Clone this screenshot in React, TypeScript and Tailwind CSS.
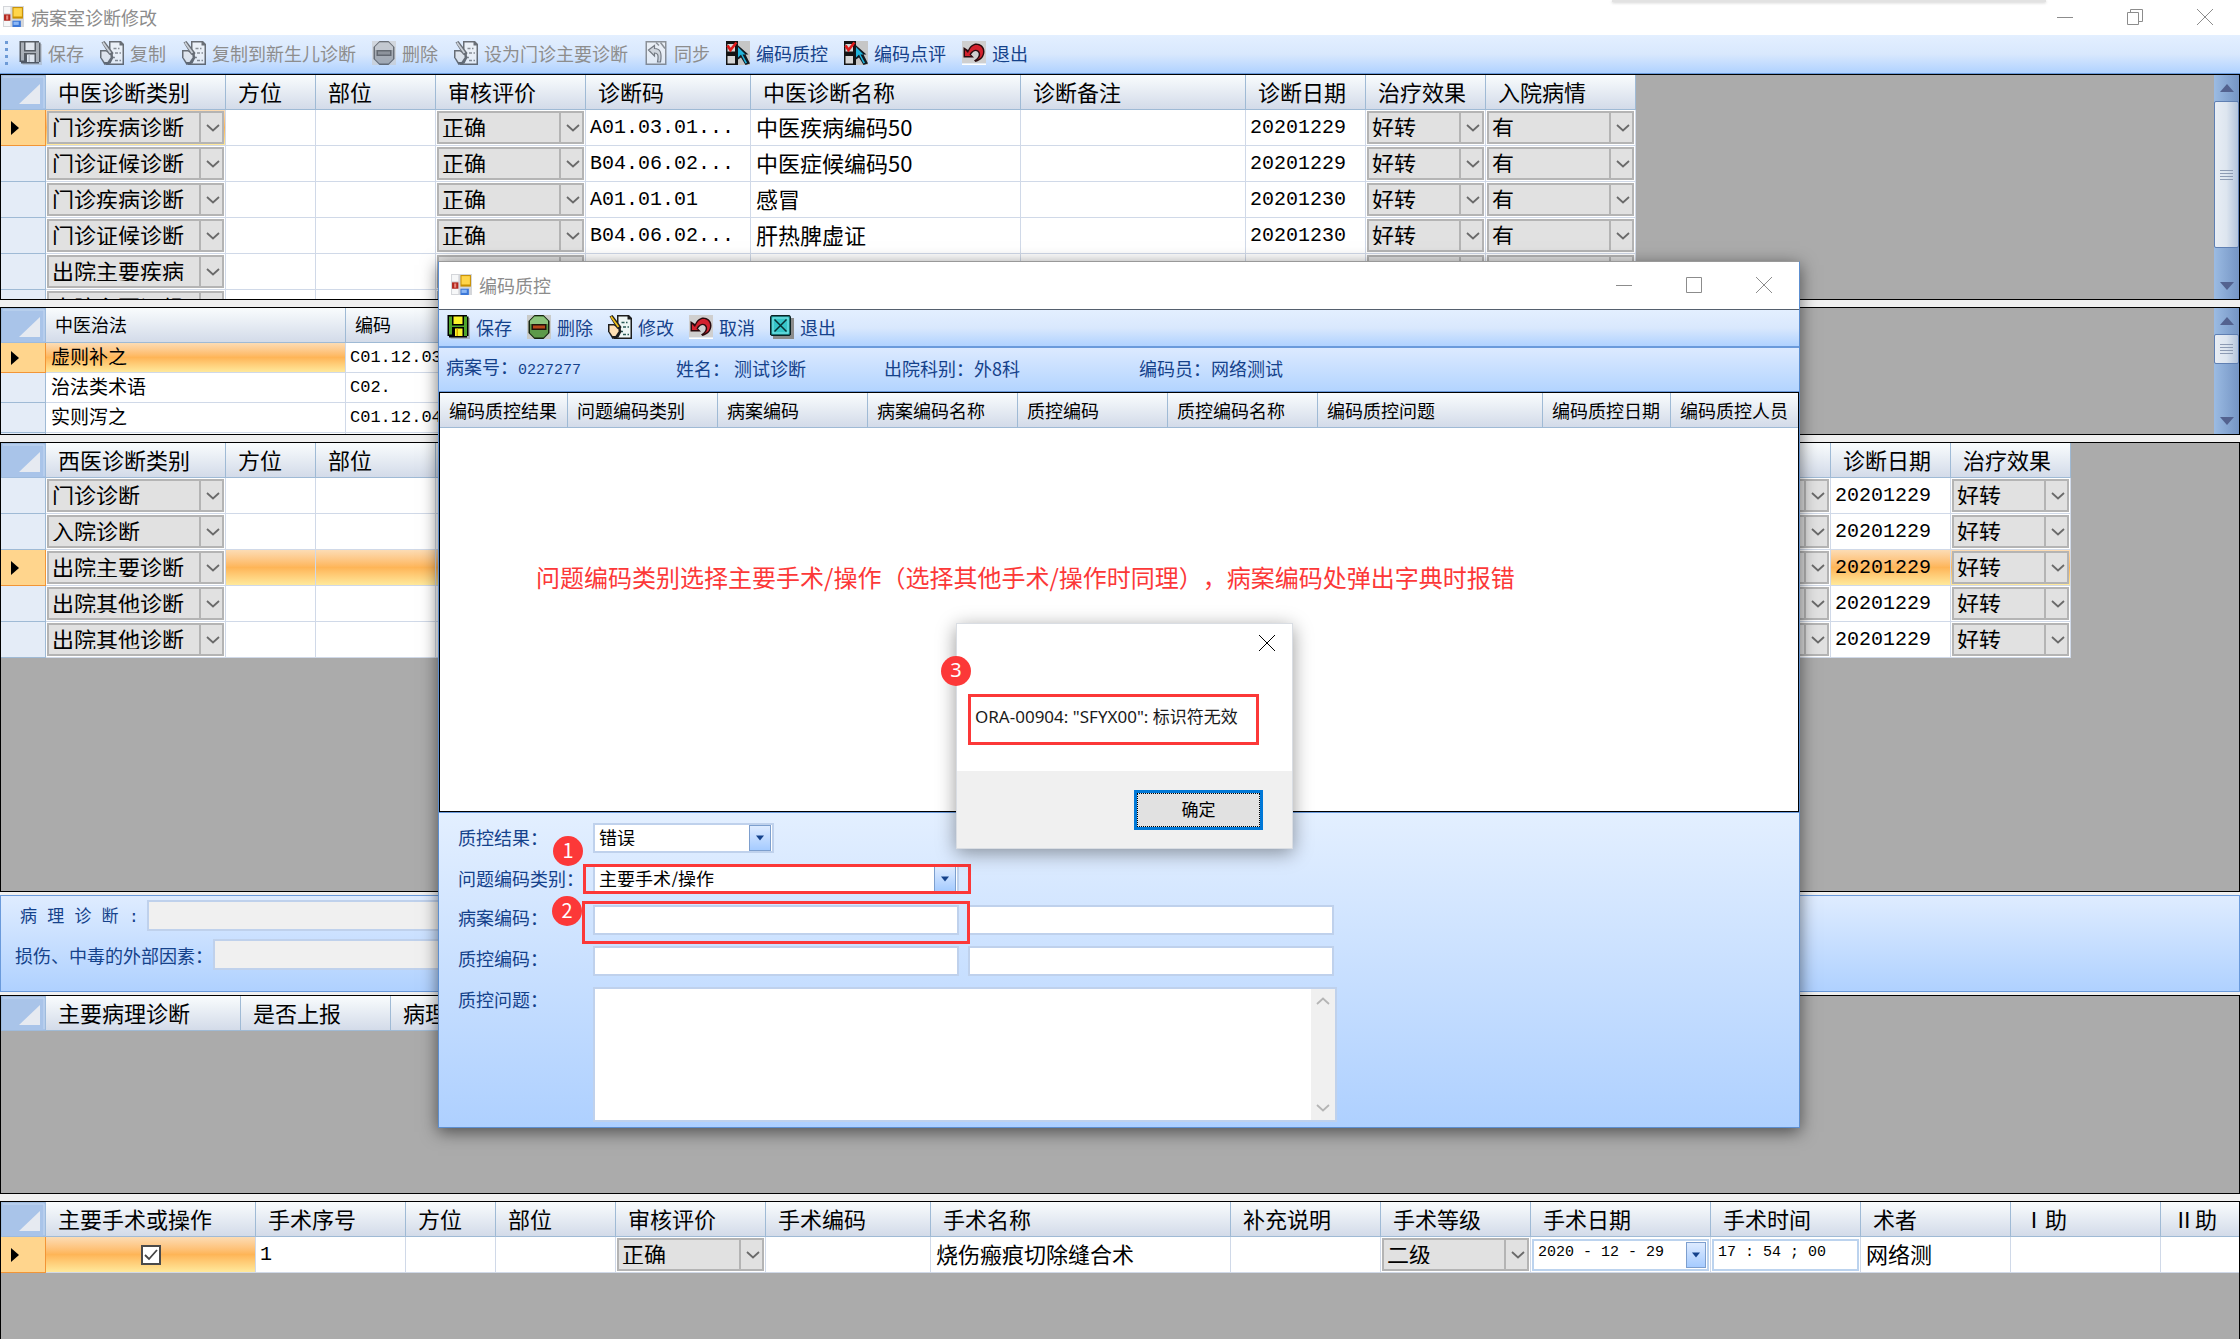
import { type ReactNode } from "react"
import clsx from "clsx"

type Column = {
  title: string
  width: number
  kind?: "combo" | "code" | "check" | "date" | "time"
}

type GridProps = {
  label: string
  columns: Column[]
  rows: string[][]
  current?: number
  highlight?: number[]
  small?: boolean
  className: string
  scroll?: ReactNode
}

/* ---------- icons ---------- */

function FormIcon() {
  return (
    <svg viewBox="0 0 20 20" className="size-[21px] shrink-0">
      <rect width="20" height="20" fill="#d4d6da" />
      <path d="M1 1h6v6H1zM1 14h6v5H1z" fill="#f6f7f8" />
      <rect x="1" y="8" width="6" height="6" fill="#b3261d" />
      <rect x="3" y="9" width="2" height="4" fill="#e88a80" />
      <rect x="9" y="1" width="10" height="11" fill="#c99000" />
      <rect x="10" y="2" width="8" height="8" fill="#ffd54a" />
      <rect x="9" y="14" width="8" height="6" fill="#3c78d8" />
      <rect x="10" y="15" width="5" height="3" fill="#8db8f5" />
    </svg>
  )
}

function SaveIcon() {
  return (
    <svg viewBox="0 0 16 16" className="size-6">
      <path d="M3 2h13v14H3z" fill="#8a8a8a" opacity=".5" />
      <path d="M1 0h13v1h1v13h-1v1H2v-1H1z" fill="#000" />
      <path d="M2 1h2v12H2zM12 1h2v13h-2zM4 7h8v1H4z" fill="#4fa52c" />
      <rect x="5" y="1" width="6" height="5" fill="#f8f32b" />
      <rect x="6" y="9" width="5" height="5" fill="#f8f32b" />
      <path d="M7 9h1v5H7z" fill="#d8a800" />
    </svg>
  )
}

function DeleteIcon() {
  return (
    <svg viewBox="0 0 16 16" className="size-6">
      <rect width="16" height="16" fill="#c9cbc9" />
      <path d="M5 0h6l4 4v8l-4 4H5l-4-4V4z" fill="#16250f" />
      <path d="M5 1h6l3 3v8l-3 3H5l-3-3V4z" fill="#5d9a4a" />
      <path d="M5 1h6l3 3v2H2V4z" fill="#8cc47c" />
      <rect x="3" y="6" width="10" height="4" fill="#23130a" />
      <rect x="4" y="7" width="8" height="2" fill="#b8481a" />
    </svg>
  )
}

function EditIcon() {
  return (
    <svg viewBox="0 0 16 16" className="size-6">
      <path d="M6 0h8l2 2v14H4V9l2-3z" fill="#1d1d1d" />
      <path d="M7 1h6v2h2v12H6V8l1-3z" fill="#eef6f4" />
      <path d="M9 5h4M10 8h4M8 11h3M10 13h4" stroke="#2c5c57" strokeWidth="1" strokeDasharray="2 1" />
      <path d="M0 6h4l4 2 1 3-2 4-4 1-3-5z" fill="#1d1d1d" />
      <path d="M1 7h3l3 2v2l-2 3H3l-2-3z" fill="#ffe0b4" />
      <path d="M1 1l2-1 6 8-1 2-2-1z" fill="#1d1d1d" />
      <path d="M2 1l5 7" stroke="#f2c21b" strokeWidth="1.2" />
    </svg>
  )
}

function UndoIcon() {
  return (
    <svg viewBox="0 0 16 16" className="size-6">
      <rect width="16" height="15" fill="#cfcfcf" />
      <rect y="15" width="16" height="1" fill="#fff" />
      <path d="M1 4v7h7L6 9c2-3 4-3 5-1 .6 2-1 4-3 5l1 1c4-1 6-4 6-7 0-4-4-6-7-5-2 .6-3 2-4 4z" fill="#2a0b0e" />
      <path d="M2 6v4h4L5 9c2-4 6-4 7-1 .5 2-.5 3.500-2 4.500 3-1 4-3 4-5.500 0-3-3-5-6-4-2 .6-3 3-4 5z" fill="#d3222e" />
    </svg>
  )
}

function PickIcon() {
  return (
    <svg viewBox="0 0 16 16" className="size-6">
      <rect width="16" height="16" fill="#c6c6c6" />
      <path d="M0 0h8v16H0z" fill="#141414" />
      <path d="M1 2h5v5H1zM1 10h5v5H1z" fill="#d6d6d6" />
      <path d="M1 3l2 3 4-5" fill="none" stroke="#e01b1b" strokeWidth="1.800" />
      <path d="M7 2l8 7h-2l3 6-3 1-3-5-3 2z" fill="#101820" />
      <path d="M8 4l5 5h-2l3 5.500-1 .5-3-6-2 2z" fill="#21b4dc" />
    </svg>
  )
}

function SyncIcon() {
  return (
    <svg viewBox="0 0 16 16" className="size-6">
      <path d="M1 0h14v16H1z" fill="#555" />
      <path d="M2 1h12v14H2z" fill="#f2f2f2" />
      <path d="M3 6l4-3v2c4 0 5 3 4 9H9c1-5 0-6-2-6v2z" fill="#c9c9c9" stroke="#333" strokeWidth=".8" />
      <path d="M11 1l3 4M8 1l2 2" stroke="#555" />
    </svg>
  )
}

function ExitIcon() {
  return (
    <svg viewBox="0 0 16 16" className="size-6">
      <path d="M2 2h14v14H2z" fill="#8b8b8b" />
      <path d="M1 0h12l1 1v12l-1 1H1l-1-1V1z" fill="#0b2224" />
      <path d="M1 1h12v12H1z" fill="#35c5c8" />
      <path d="M3 3l8 8M11 3l-8 8" stroke="#083033" strokeWidth="1" />
      <path d="M2 2h10v10H2z" fill="none" stroke="#8be8ea" strokeWidth=".6" />
    </svg>
  )
}

function Chevron({ up = false }: { up?: boolean }) {
  return (
    <svg viewBox="0 0 14 8" className={clsx("h-2 w-[14px]", up && "rotate-180")} aria-hidden="true">
      <path d="M1 1l6 5.500L13 1" fill="none" stroke="currentColor" strokeWidth="1.800" />
    </svg>
  )
}

function Triangle({ up = false }: { up?: boolean }) {
  return (
    <svg viewBox="0 0 14 8" className={clsx("h-2 w-[14px]", up && "rotate-180")} aria-hidden="true">
      <path d="M0 0h14L7 8z" fill="#53628f" />
    </svg>
  )
}

/* ---------- window chrome ---------- */

function WindowButtons({ restore = false }: { restore?: boolean }) {
  return (
    <div className="ml-auto flex h-full text-[#8c8c8c]">
      <button aria-label="最小化" className="flex w-[70px] items-center justify-center">
        <svg viewBox="0 0 16 16" className="size-4"><path d="M0 8.500h16" stroke="currentColor" /></svg>
      </button>
      <button aria-label={restore ? "还原" : "最大化"} className="flex w-[70px] items-center justify-center">
        <svg viewBox="0 0 16 16" className="size-4" fill="none" stroke="currentColor">
          {restore ? <path d="M.5 3.500h11v12H.5zM3.500 3.500v-3h12v12h-4" /> : <path d="M.5.5h15v15H.5z" />}
        </svg>
      </button>
      <button aria-label="关闭" className="flex w-[70px] items-center justify-center">
        <svg viewBox="0 0 16 16" className="size-4"><path d="M0 0l16 16M16 0L0 16" stroke="currentColor" /></svg>
      </button>
    </div>
  )
}

function ToolButton({ icon, text, disabled = false }: { icon: ReactNode; text: string; disabled?: boolean }) {
  return (
    <button
      disabled={disabled}
      className={clsx("flex items-center gap-1.5 text-lg leading-6", disabled ? "text-[#8d8d8d]" : "text-[#15428b]")}
    >
      <span className={clsx(disabled && "opacity-60 grayscale")}>{icon}</span>
      {text}
    </button>
  )
}

function ScrollBar({ thumb }: { thumb: string }) {
  return (
    <div className="flex w-[25px] shrink-0 flex-col bg-linear-to-r from-[#9bbbe3] to-[#7595c4]">
      <div className="flex h-[26px] shrink-0 items-center justify-center"><Triangle up /></div>
      <div
        className={clsx(
          "flex shrink-0 flex-col items-center justify-center gap-0.5 rounded-xs border border-[#5f7fb2] bg-linear-to-r from-[#e9eef5] via-[#dde5ef] to-[#b3c4dc]",
          thumb
        )}
      >
        {[0, 1, 2, 3].map((i) => (
          <span key={i} className="h-px w-[13px] bg-[#8d9bb3]" />
        ))}
      </div>
      <div className="flex-1" />
      <div className="flex h-[26px] shrink-0 items-center justify-center"><Triangle /></div>
    </div>
  )
}

/* ---------- grid ---------- */

function Combo({ label, value }: { label: string; value: string }) {
  return (
    <div className="relative h-[33px]">
      <select
        aria-label={label}
        defaultValue={value}
        className="block h-full w-full appearance-none border-2 border-[#b4b4b4] bg-[#e1e1e1] pb-[3px] pl-[3px] text-[22px] leading-none text-black"
      >
        <option>{value}</option>
      </select>
      <span className="pointer-events-none absolute inset-y-0 right-0 flex w-[25px] items-center justify-center border-l-2 border-[#b4b4b4] text-[#6a6a6a]">
        <Chevron />
      </span>
    </div>
  )
}

function DropArrow() {
  return (
    <span className="pointer-events-none flex h-[26px] w-[22px] items-center justify-center border border-[#7d9fce] bg-linear-to-b from-[#deebff] to-[#a5cbff]">
      <svg viewBox="0 0 8 5" className="h-[6px] w-2"><path d="M0 0h8L4 5z" fill="#15428b" /></svg>
    </span>
  )
}

function Cell({ column, value }: { column: Column; value: string }) {
  switch (column.kind) {
    case "combo":
      return <Combo label={column.title || "审核"} value={value} />
    case "code":
      return <span className="pl-1 font-[Liberation_Mono,monospace]">{value}</span>
    case "check":
      return (
        <span className="relative mx-auto block size-5">
          <input
            type="checkbox"
            aria-label={column.title}
            defaultChecked
            className="block size-5 appearance-none border-2 border-[#4a4a4a] bg-white"
          />
          <svg viewBox="0 0 20 20" className="pointer-events-none absolute inset-0">
            <path d="M4 10l4 4 8-9" fill="none" stroke="#444" strokeWidth="1.800" />
          </svg>
        </span>
      )
    case "date":
    case "time":
      return (
        <span className="mx-px flex h-[32px] items-center border-2 border-[#bcd3ee] bg-white pr-px">
          <input
            aria-label={column.title}
            defaultValue={value}
            className="w-full min-w-0 pb-1 pl-1 font-[Liberation_Mono,monospace] text-[15px] leading-5 text-black"
          />
          {column.kind === "date" && <DropArrow />}
        </span>
      )
    default:
      return <span className="pl-[5px]">{value}</span>
  }
}

function Grid({ label, columns, rows, current, highlight = [], small = false, className, scroll }: GridProps) {
  const total = columns.reduce((sum, c) => sum + c.width, 45)

  return (
    <section aria-label={label} className={clsx("flex border border-black bg-[#ababab]", className)}>
      <div className="min-w-0 flex-1 overflow-hidden">
        <table className="table-fixed border-separate border-spacing-0 text-black" style={{ width: total }}>
          <colgroup>
            <col className="w-[45px]" />
            {columns.map((c, i) => (
              <col key={i} style={{ width: c.width }} />
            ))}
          </colgroup>
          <thead>
            <tr className="h-[35px]">
              <th className="border border-[#9ebbdd] bg-[#a9c4e9] p-0">
                <svg viewBox="0 0 43 33" className="block h-[33px] w-[43px]" aria-hidden="true">
                  <path d="M1 1h41v31" fill="none" stroke="#c4d7f0" />
                  <path d="M38 8v20H17z" fill="#e6eaf1" />
                </svg>
              </th>
              {columns.map((c, i) => (
                <th
                  key={i}
                  className={clsx(
                    "border-r border-b border-[#9fbad5] bg-linear-to-b from-[#f9fcfd] to-[#d3dbe9] pt-0 pb-[3px] text-left font-normal whitespace-nowrap",
                    small ? "pl-[9px] text-lg leading-6" : "pl-3 text-[22px] leading-7"
                  )}
                >
                  {c.title}
                </th>
              ))}
            </tr>
          </thead>
          <tbody>
            {rows.map((row, r) => (
              <tr key={r} className={small ? "h-[30px]" : "h-[36px]"}>
                <th
                  className={clsx(
                    "border-r border-b p-0",
                    r === current ? "border-[#f29536] bg-[#ffd58d]" : "border-[#9fbad5] bg-[#e4ecf7]"
                  )}
                >
                  {r === current && (
                    <svg viewBox="0 0 8 14" className="ml-[10px] h-[14px] w-2" aria-hidden="true">
                      <path d="M0 0l8 7-8 7z" />
                    </svg>
                  )}
                </th>
                {columns.map((c, i) => (
                  <td
                    key={i}
                    className={clsx(
                      "border-r border-b border-[#d0d9e8] whitespace-nowrap",
                      c.kind === "combo" ? "px-px py-0" : c.kind && c.kind !== "code" ? "p-0" : "px-0 pt-0 pb-[3px]",
                      c.kind === "code"
                        ? small ? "text-[17px] leading-5" : "text-xl leading-7"
                        : small ? "text-[19px] leading-6" : "text-[22px] leading-7",
                      r === current && highlight.includes(i)
                        ? "bg-linear-to-b from-[#fcdcb4] via-[#feb557] to-[#ffe99b]"
                        : "bg-white"
                    )}
                  >
                    <Cell column={c} value={row[i] ?? ""} />
                  </td>
                ))}
              </tr>
            ))}
          </tbody>
        </table>
      </div>
      {scroll}
    </section>
  )
}

const tcmColumns: Column[] = [
  { title: "中医诊断类别", width: 180, kind: "combo" },
  { title: "方位", width: 90 },
  { title: "部位", width: 120 },
  { title: "审核评价", width: 150, kind: "combo" },
  { title: "诊断码", width: 165, kind: "code" },
  { title: "中医诊断名称", width: 270 },
  { title: "诊断备注", width: 225 },
  { title: "诊断日期", width: 120, kind: "code" },
  { title: "治疗效果", width: 120, kind: "combo" },
  { title: "入院病情", width: 150, kind: "combo" },
]

const tcmRows = [
  ["门诊疾病诊断", "", "", "正确", "A01.03.01...", "中医疾病编码50", "", "20201229", "好转", "有"],
  ["门诊证候诊断", "", "", "正确", "B04.06.02...", "中医症候编码50", "", "20201229", "好转", "有"],
  ["门诊疾病诊断", "", "", "正确", "A01.01.01", "感冒", "", "20201230", "好转", "有"],
  ["门诊证候诊断", "", "", "正确", "B04.06.02...", "肝热脾虚证", "", "20201230", "好转", "有"],
  ["出院主要疾病", "", "", "正确", "", "中医疾病编码", "", "", "好转", "有"],
  ["出院主要证候", "", "", "正确", "", "", "", "", "好转", "有"],
]

const therapyColumns: Column[] = [
  { title: "中医治法", width: 300 },
  { title: "编码", width: 150, kind: "code" },
]

const therapyRows = [
  ["虚则补之", "C01.12.03"],
  ["治法类术语", "C02."],
  ["实则泻之", "C01.12.04"],
  ["", ""],
]

const westernColumns: Column[] = [
  { title: "西医诊断类别", width: 180, kind: "combo" },
  { title: "方位", width: 90 },
  { title: "部位", width: 120 },
  { title: "", width: 1245 },
  { title: "", width: 150, kind: "combo" },
  { title: "诊断日期", width: 120, kind: "code" },
  { title: "治疗效果", width: 120, kind: "combo" },
]

const westernRows = ["门诊诊断", "入院诊断", "出院主要诊断", "出院其他诊断", "出院其他诊断"].map((name) => [
  name, "", "", "", "", "20201229", "好转",
])

const pathologyColumns: Column[] = [
  { title: "主要病理诊断", width: 195 },
  { title: "是否上报", width: 150 },
  { title: "病理", width: 165 },
]

const surgeryColumns: Column[] = [
  { title: "主要手术或操作", width: 210, kind: "check" },
  { title: "手术序号", width: 150, kind: "code" },
  { title: "方位", width: 90 },
  { title: "部位", width: 120 },
  { title: "审核评价", width: 150, kind: "combo" },
  { title: "手术编码", width: 165 },
  { title: "手术名称", width: 300 },
  { title: "补充说明", width: 150 },
  { title: "手术等级", width: 150, kind: "combo" },
  { title: "手术日期", width: 180, kind: "date" },
  { title: "手术时间", width: 150, kind: "time" },
  { title: "术者", width: 150 },
  { title: "Ⅰ助", width: 150 },
  { title: "Ⅱ助", width: 150 },
]

const surgeryRows = [
  ["", "1", "", "", "正确", "", "烧伤瘢痕切除缝合术", "", "二级", "2020 - 12 - 29", "17 : 54 ; 00", "网络测", "", ""],
]

/* ---------- quality control dialog ---------- */

const qcColumns = [
  { title: "编码质控结果", width: 128 },
  { title: "问题编码类别", width: 150 },
  { title: "病案编码", width: 150 },
  { title: "病案编码名称", width: 150 },
  { title: "质控编码", width: 150 },
  { title: "质控编码名称", width: 150 },
  { title: "编码质控问题", width: 225 },
  { title: "编码质控日期", width: 128 },
  { title: "编码质控人员", width: 129 },
]

const fieldBox = "h-[30px] border-2 border-[#bfd1ec] bg-white text-lg leading-none text-black"

function FieldSelect({ id, value, className }: { id: string; value: string; className: string }) {
  return (
    <div className={clsx("relative", className)}>
      <select id={id} defaultValue={value} className={clsx(fieldBox, "block w-full appearance-none pb-[3px] pl-1")}>
        <option>{value}</option>
      </select>
      <span className="pointer-events-none absolute top-0.5 right-[3px]">
        <DropArrow />
      </span>
    </div>
  )
}

function Badge({ n, className }: { n: number; className: string }) {
  return (
    <span
      className={clsx(
        "absolute flex size-[30px] items-center justify-center rounded-full bg-[#fc3838] pb-0.5 text-xl leading-none text-white",
        className
      )}
    >
      {n}
    </span>
  )
}

function MessageBox() {
  return (
    <div
      role="alertdialog"
      aria-label="错误"
      className="absolute top-[361px] left-[517px] flex h-[226px] w-[337px] flex-col border border-[#d9dde3] bg-white font-[Noto_Sans,Noto_Sans_CJK_SC,sans-serif] text-[17px] shadow-[0_4px_18px_rgba(0,0,0,0.4)]"
    >
      <div className="flex justify-end pt-[11px] pr-[17px]">
        <button aria-label="关闭" className="p-0">
          <svg viewBox="0 0 16 16" className="size-4"><path d="M0 0l16 16M16 0L0 16" stroke="#000" /></svg>
        </button>
      </div>
      <div className="flex flex-1 items-end px-[11px] pb-[26px]">
        <p className="h-[51px] w-[291px] border-3 border-[#fc3838] pt-2 pl-1 leading-6 whitespace-nowrap text-[#1a1a1a]">
          ORA-00904: "SFYX00": 标识符无效
        </p>
      </div>
      <div className="flex h-[77px] items-center justify-end bg-[#f0f0f0] pr-[29px]">
        <button className="h-10 w-[129px] border-3 border-[#0078d7] bg-[#e1e1e1] text-black">
          <span className="flex h-full items-center justify-center border border-dotted border-black">确定</span>
        </button>
      </div>
      <Badge n={3} className="top-[32px] -left-4" />
    </div>
  )
}

function QualityDialog() {
  return (
    <div
      role="dialog"
      aria-label="编码质控"
      className="absolute top-[261px] right-0.5 left-0 mx-auto w-[1362px] border border-[#5d8fd0] border-t-[#999] bg-white shadow-[0_4px_16px_rgba(0,0,0,0.55)]"
    >
      <div className="flex h-[47px] items-center gap-[7px] pb-0.5 pl-3 text-lg leading-6 text-[#8c8c8c]">
        <FormIcon />
        编码质控
        <WindowButtons />
      </div>

      <div className="flex h-[39px] items-center gap-[15px] border-t border-b-2 border-t-[#55606e] border-b-[#6a9adb] bg-linear-to-b from-[#e3efff] via-[#d9e8fd] to-[#b0d2ff] pb-[3px] pl-[7px]">
        <ToolButton icon={<SaveIcon />} text="保存" />
        <ToolButton icon={<DeleteIcon />} text="删除" />
        <ToolButton icon={<EditIcon />} text="修改" />
        <ToolButton icon={<UndoIcon />} text="取消" />
        <ToolButton icon={<ExitIcon />} text="退出" />
      </div>

      <div className="grid h-[44px] grid-cols-[230px_208px_255px_1fr] items-center border-b border-[#6a9adb] bg-linear-to-b from-[#dceaff] to-[#b3d4ff] pb-[3px] pl-[7px] text-lg leading-6 text-[#15428b]">
        <p>
          病案号：<span className="font-[Liberation_Mono,monospace] text-[15px]">0227277</span>
        </p>
        <p>姓名： 测试诊断</p>
        <p>出院科别：外8科</p>
        <p>编码员：网络测试</p>
      </div>

      <div className="h-[420px] overflow-hidden border border-black bg-white">
        <table className="w-full table-fixed border-separate border-spacing-0 text-lg leading-6 text-black">
          <colgroup>
            {qcColumns.map((c) => (
              <col key={c.title} style={{ width: c.width }} />
            ))}
          </colgroup>
          <thead>
            <tr className="h-[35px]">
              {qcColumns.map((c) => (
                <th
                  key={c.title}
                  className="border-r border-b border-[#9fbad5] bg-linear-to-b from-[#f9fcfd] to-[#d3dbe9] pt-0 pb-px pl-[9px] text-left font-normal whitespace-nowrap"
                >
                  {c.title}
                </th>
              ))}
            </tr>
          </thead>
        </table>
        <p className="pt-[131px] pl-24 text-2xl leading-9 text-[#fc3838] [text-spacing-trim:space-all]">
          问题编码类别选择主要手术/操作（选择其他手术/操作时同理），病案编码处弹出字典时报错
        </p>
      </div>

      <form className="grid grid-cols-[135px_366px_375px] gap-y-[11px] border-t border-[#6a9adb] bg-linear-to-b from-[#e3efff] to-[#aed0ff] pt-[10px] pb-[5px] pl-[19px] text-lg leading-7 text-[#15428b]">
        <label htmlFor="result">质控结果：</label>
        <FieldSelect id="result" value="错误" className="col-span-2 w-[181px]" />

        <label htmlFor="category">问题编码类别：</label>
        <FieldSelect id="category" value="主要手术/操作" className="col-span-2 w-[366px]" />

        <label htmlFor="recordCode" className="leading-6">病案编码：</label>
        <input id="recordCode" className={fieldBox} />
        <input aria-label="病案编码名称" className={clsx(fieldBox, "ml-[9px]")} />

        <label htmlFor="qcCode" className="leading-6">质控编码：</label>
        <input id="qcCode" className={fieldBox} />
        <input aria-label="质控编码名称" className={clsx(fieldBox, "ml-[9px]")} />

        <label htmlFor="problem" className="leading-6">质控问题：</label>
        <div className="col-span-2 -mr-[3px] flex h-[135px] border-2 border-[#bfd1ec] bg-white">
          <textarea id="problem" className="flex-1 resize-none overflow-hidden text-black" />
          <div className="flex w-6 flex-col items-center justify-between bg-[#f0f0f0] py-2 text-[#b5b5b5]">
            <Chevron up />
            <Chevron />
          </div>
        </div>
      </form>

      {/* step markers */}
      <div className="pointer-events-none absolute top-[602px] left-[144px] h-[30px] w-[388px] border-3 border-[#fc3838]" />
      <div className="pointer-events-none absolute top-[639px] left-[143px] h-[43px] w-[388px] border-3 border-[#fc3838]" />
      <Badge n={1} className="top-[574px] left-[114px]" />
      <Badge n={2} className="top-[634px] left-[113px]" />

      <MessageBox />
    </div>
  )
}

export default function App() {
  return (
    <div className="relative flex min-h-screen w-full flex-col overflow-hidden bg-[#f0f0f0] font-[Noto_Sans_CJK_SC,sans-serif]">
      <header className="relative flex h-[35px] shrink-0 items-center gap-[7px] bg-white pb-0.5 pl-[3px] text-lg leading-6 text-[#8c8c8c]">
        <FormIcon />
        病案室诊断修改
        <WindowButtons restore />
        <span className="absolute top-0 right-[194px] h-0.5 w-[434px] bg-[#e2e2e2] shadow-[0_1px_3px_rgba(0,0,0,0.2)]" />
      </header>

      <nav
        aria-label="工具栏"
        className="flex h-[39px] shrink-0 items-center gap-4 border-b border-[#6a9adb] bg-linear-to-b from-[#e3efff] via-[#d9e8fd] to-[#b0d2ff] pb-[3px] pl-[5px]"
      >
        <span className="-mr-1.5 flex flex-col gap-1">
          {[0, 1, 2, 3].map((i) => (
            <i key={i} className="size-[3px] bg-[#6d9ad6]" />
          ))}
        </span>
        <ToolButton icon={<SaveIcon />} text="保存" disabled />
        <ToolButton icon={<EditIcon />} text="复制" disabled />
        <ToolButton icon={<EditIcon />} text="复制到新生儿诊断" disabled />
        <ToolButton icon={<DeleteIcon />} text="删除" disabled />
        <ToolButton icon={<EditIcon />} text="设为门诊主要诊断" disabled />
        <ToolButton icon={<SyncIcon />} text="同步" disabled />
        <ToolButton icon={<PickIcon />} text="编码质控" />
        <ToolButton icon={<PickIcon />} text="编码点评" />
        <ToolButton icon={<UndoIcon />} text="退出" />
      </nav>

      <main className="flex flex-1 flex-col">
        <Grid
          label="中医诊断"
          columns={tcmColumns}
          rows={tcmRows}
          current={0}
          highlight={[0]}
          className="mb-[7px] h-[226px]"
          scroll={<ScrollBar thumb="h-[147px]" />}
        />
        <Grid
          label="中医治法"
          columns={therapyColumns}
          rows={therapyRows}
          current={0}
          highlight={[0]}
          small
          className="mb-[7px] h-[128px]"
          scroll={<ScrollBar thumb="h-[30px]" />}
        />
        <Grid
          label="西医诊断"
          columns={westernColumns}
          rows={westernRows}
          current={2}
          highlight={[1, 2, 3, 5, 6]}
          className="mb-[3px] h-[450px]"
        />

        <section className="mb-[3px] flex h-[97px] flex-col gap-2 border border-[#6a9adb] bg-linear-to-b from-[#dfecff] to-[#afd1ff] pt-1 text-lg text-[#15428b]">
          <div className="flex items-center">
            <label htmlFor="pathology" className="w-[146px] pt-1 pl-[19px] font-[Liberation_Mono,Noto_Sans_CJK_SC,monospace] text-[17px] leading-6 whitespace-nowrap">
              病 理 诊 断 :
            </label>
            <input id="pathology" disabled className="h-[31px] w-1/2 border-2 border-[#bfd1ec] bg-[#f0f0f0]" />
          </div>
          <div className="flex items-center">
            <label htmlFor="external" className="w-[212px] pl-[14px] leading-6 whitespace-nowrap">
              损伤、中毒的外部因素：
            </label>
            <input id="external" disabled className="h-[31px] w-1/2 border-2 border-[#bfd1ec] bg-[#f0f0f0]" />
          </div>
        </section>

        <Grid label="病理诊断" columns={pathologyColumns} rows={[]} className="mb-[7px] h-[199px]" />
        <Grid
          label="手术"
          columns={surgeryColumns}
          rows={surgeryRows}
          current={0}
          highlight={[0]}
          className="flex-1 border-b-0"
        />
      </main>

      <QualityDialog />
    </div>
  )
}
